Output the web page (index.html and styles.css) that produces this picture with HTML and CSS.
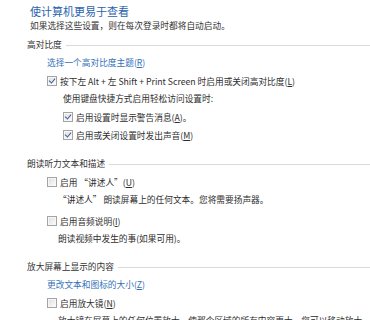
FILE: index.html
```html
<!DOCTYPE html>
<html lang="zh-CN">
<head>
<meta charset="utf-8">
<link rel="stylesheet" href="styles.css">
</head>
<body>
<div class="page">
  <h1 class="title">使计算机更易于查看</h1>
  <p class="subtitle">如果选择这些设置，则在每次登录时都将自动启动。</p>

  <section class="group">
    <div class="group-head"><span>高对比度</span></div>
    <div class="group-body">
      <a class="link">选择一个高对比度主题(<u>R</u>)</a>
      <label class="cb-row"><span class="box checked"></span><span>按下左 Alt + 左 Shift + Print Screen 时启用或关闭高对比度(<u>L</u>)</span></label>
      <div class="sub">
        <p class="row">使用键盘快捷方式启用轻松访问设置时:</p>
        <label class="cb-row"><span class="box checked"></span><span>启用设置时显示警告消息(<u>A</u>)。</span></label>
        <label class="cb-row"><span class="box checked"></span><span>启用或关闭设置时发出声音(<u>M</u>)</span></label>
      </div>
    </div>
  </section>

  <section class="group g2">
    <div class="group-head"><span>朗读听力文本和描述</span></div>
    <div class="group-body">
      <label class="cb-row"><span class="box"></span><span>启用 “讲述人”(<u>U</u>)</span></label>
      <p class="row desc">“讲述人” 朗读屏幕上的任何文本。您将需要扬声器。</p>
      <label class="cb-row spaced"><span class="box"></span><span>启用音频说明(<u>I</u>)</span></label>
      <p class="row desc">朗读视频中发生的事(如果可用)。</p>
    </div>
  </section>

  <section class="group g3">
    <div class="group-head"><span>放大屏幕上显示的内容</span></div>
    <div class="group-body">
      <a class="link">更改文本和图标的大小(<u>Z</u>)</a>
      <label class="cb-row"><span class="box"></span><span>启用放大镜(<u>N</u>)</span></label>
      <p class="row desc">放大镜在屏幕上的任何位置放大，使那个区域的所有内容更大。您可以移动放大</p>
    </div>
  </section>
</div>
</body>
</html>
```

FILE: styles.css
```css
html, body {
  margin: 0;
  padding: 0;
  background: #ffffff;
}
body {
  font-family: "Noto Sans CJK SC", "Noto Sans", sans-serif;
  font-size: 8.7px;
  color: #2e2e2e;
  overflow: hidden;
  width: 370px;
  height: 320px;
}
.page {
  padding: 4px 0 0 27px;
}
.title {
  margin: 0 0 0 3px;
  font-size: 11px;
  font-weight: normal;
  line-height: 15px;
  color: #2a63ad;
}
.subtitle {
  margin: 1px 0 0 3px;
  line-height: 12px;
  color: #333;
}
.group {
  margin-top: 4px;
}
.g2 { margin-top: 11px; }
.g3 { margin-top: 10px; }
.group-head {
  display: flex;
  align-items: center;
  gap: 4px;
  height: 16px;
  color: #333;
}
.group-head::after {
  content: "";
  flex: 1;
  height: 1px;
  background: #d9d9d9;
  margin-top: 3px;
}
.group-body {
  display: flex;
  flex-direction: column;
  padding-left: 20px;
  margin-top: 2px;
}
.link {
  display: block;
  line-height: 18px;
  color: #3471b9;
}
.row {
  margin: 0;
  line-height: 18px;
  white-space: nowrap;
}
.cb-row {
  display: flex;
  align-items: center;
  gap: 3px;
  height: 18px;
  white-space: nowrap;
}
.cb-row.spaced { margin-top: 3px; }
.desc { padding-left: 11px; }
.sub {
  display: flex;
  flex-direction: column;
  padding-left: 16px;
}
.box {
  flex: none;
  width: 8px;
  height: 8px;
  border: 1px solid #a4a4a4;
  background: linear-gradient(135deg, #dcdcdc 0%, #f4f4f4 70%, #ffffff 100%);
  box-shadow: inset 0 0 0 1px #f7f7f7;
  position: relative;
}
.box.checked::after {
  content: "";
  position: absolute;
  left: 2px;
  top: 0px;
  width: 3px;
  height: 5px;
  border: solid #3b5e9c;
  border-width: 0 1.5px 1.5px 0;
  transform: rotate(40deg);
}
u {
  text-decoration: underline;
  text-underline-offset: 1px;
}
```
